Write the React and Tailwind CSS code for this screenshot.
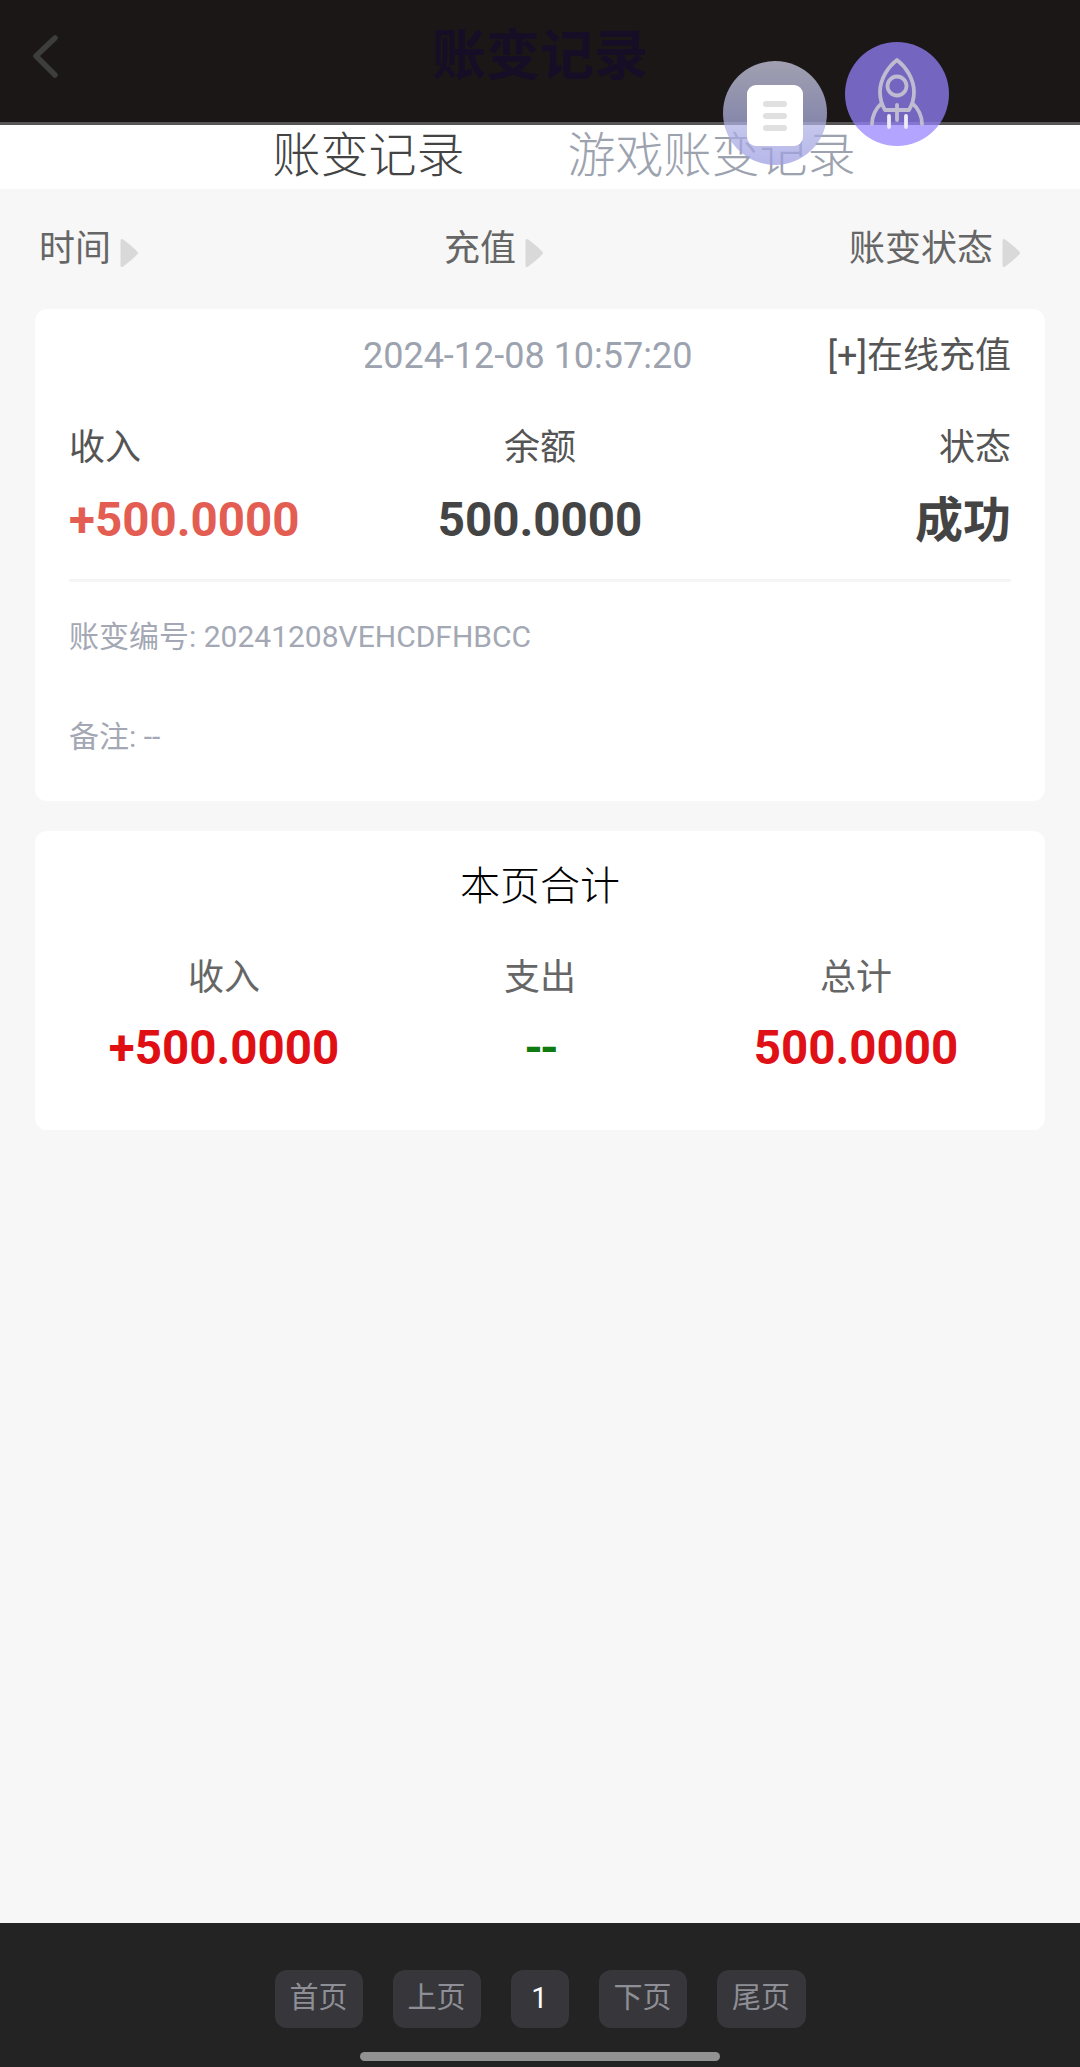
import React from "react";

const FONT = "font-['Roboto','Noto_Sans_CJK_SC',sans-serif]";

function Arrow() {
  return (
    <svg width="18" height="30" viewBox="0 0 18 30" className="mt-[7px] ml-[9px]">
      <path d="M2 2.5 C8 7 13 11 16.5 15 C13 19 8 23 2 27.5 Z" fill="#d9d9d9" stroke="#d9d9d9" strokeWidth="3" strokeLinejoin="round" />
    </svg>
  );
}

function FilterItem({ label }) {
  return (
    <div className="flex items-center">
      <span className="text-[36px] leading-[50px] text-[#666]">{label}</span>
      <Arrow />
    </div>
  );
}

function RocketIcon() {
  return (
    <svg width="104" height="104" viewBox="0 0 104 104" fill="none" stroke="#bfbbd0" strokeWidth="3.8" strokeLinecap="round" strokeLinejoin="round">
      <path d="M52 18 C43 25 35 37 35 50 C35 57 37 63 40 68 L64 68 C67 63 69 57 69 50 C69 37 61 25 52 18 Z" />
      <circle cx="52" cy="44" r="9.5" />
      <path d="M36 62 C31 66 27 74 27 82" />
      <path d="M68 62 C73 66 77 74 77 82" />
      <path d="M52 63 L52 78" />
      <path d="M44 74 L44 85" stroke="#eeeaf6" />
      <path d="M61 74 L61 85" stroke="#eeeaf6" />
    </svg>
  );
}

function FloatButtons() {
  return (
    <>
      <div className="absolute left-[723px] top-[61px] flex h-[104px] w-[104px] items-center justify-center rounded-full bg-linear-to-b from-[#d4d5ecb8] to-[#9a9be0b8]">
        <div className="mt-[5px] flex h-[61px] w-[56px] flex-col items-center justify-center gap-[6px] rounded-[9px] bg-white">
          <span className="h-[6px] w-[24px] rounded-full bg-[#e0e0e0]" />
          <span className="h-[6px] w-[24px] rounded-full bg-[#e0e0e0]" />
          <span className="h-[6px] w-[24px] rounded-full bg-[#e0e0e0]" />
        </div>
      </div>
      <div className="absolute left-[845px] top-[42px] h-[104px] w-[104px] rounded-full bg-[#9582ffba]">
        <RocketIcon />
      </div>
    </>
  );
}

function PageButton({ children, active, className }) {
  return (
    <div
      className={`flex h-[58px] items-center justify-center rounded-[12px] bg-[#37373b] text-[29px] ${className} ${
        active ? "text-white" : "text-[#8e8e96]"
      }`}
    >
      {children}
    </div>
  );
}

export default function App() {
  return (
    <div className={`relative flex h-[2067px] w-[1080px] flex-col overflow-hidden bg-[#f7f7f7] ${FONT}`}>
      <header className="grid h-[125px] grid-cols-[1fr_auto_1fr] items-center border-b-[3px] border-[#555] bg-[#1a1716] pb-[8px]">
        <svg width="30" height="46" viewBox="0 0 30 46" fill="none" className="ml-[30px]">
          <path d="M25 4 L6 22 L25 41" stroke="#3d3d3d" strokeWidth="5.5" strokeLinecap="round" strokeLinejoin="round" />
        </svg>
        <h1 className="text-[54px] font-bold leading-[70px] text-[#160d26]">账变记录</h1>
        <div />
      </header>

      <div className="flex h-[64px] items-center justify-center gap-[103px] bg-white pb-[3px] pl-[48px] text-[48px] leading-[64px]">
        <span className="font-light text-[#444]">账变记录</span>
        <span className="font-light text-[#9ca3af]">游戏账变记录</span>
      </div>

      <div className="flex h-[120px] items-center justify-between pr-[60px] pl-[39px]">
        <FilterItem label="时间" />
        <FilterItem label="充值" />
        <FilterItem label="账变状态" />
      </div>

      <section className="mx-[35px] rounded-[12px] bg-white px-[34px] pt-[22px] pb-[39px]">
        <div className="flex h-[50px] items-center justify-end gap-[135px]">
          <span className="text-[36px] text-[#9ca3af]">2024-12-08 10:57:20</span>
          <span className="text-[36px] text-[#555]">[+]在线充值</span>
        </div>
        <div className="mt-[40px] grid h-[50px] grid-cols-3 items-center text-[36px] text-[#555]">
          <span>收入</span>
          <span className="text-center">余额</span>
          <span className="text-right">状态</span>
        </div>
        <div className="mt-[14px] grid h-[60px] grid-cols-3 items-center text-[47.5px] font-bold">
          <span className="text-[#e35d52]">+500.0000</span>
          <span className="text-center text-[#444]">500.0000</span>
          <span className="text-right text-[48px] text-[#444]">成功</span>
        </div>
        <div className="mt-[34px] h-[3px] bg-[#f5f5f5]" />
        <div className="mt-[30px] h-[50px] text-[30px] leading-[50px] text-[#a3a8b4]">账变编号: 20241208VEHCDFHBCC</div>
        <div className="mt-[50px] h-[50px] text-[30px] leading-[50px] text-[#a3a8b4]">备注: --</div>
      </section>

      <section className="mx-[35px] mt-[30px] rounded-[12px] bg-white px-[31px] pt-[31px] pb-[57px]">
        <div className="h-[50px] text-center text-[40px] font-light leading-[50px] text-black">本页合计</div>
        <div className="mt-[39px] grid h-[50px] grid-cols-3 items-center text-center text-[36px] text-[#666]">
          <span>收入</span>
          <span>支出</span>
          <span>总计</span>
        </div>
        <div className="mt-[12px] grid h-[60px] grid-cols-3 items-center text-center text-[47.5px] font-bold">
          <span className="text-[#e00f14]">+500.0000</span>
          <span className="text-[#0f7a0f] tracking-[-3px]">--</span>
          <span className="text-[#df1016]">500.0000</span>
        </div>
      </section>

      <footer className="mt-auto flex h-[144px] flex-col items-center bg-[#232323] pt-[47px]">
        <div className="flex items-center gap-[30px]">
          <PageButton className="w-[88px]">首页</PageButton>
          <PageButton className="w-[88px]">上页</PageButton>
          <PageButton className="w-[58px]" active>1</PageButton>
          <PageButton className="w-[88px]">下页</PageButton>
          <PageButton className="w-[89px]">尾页</PageButton>
        </div>
        <div className="mt-[24px] h-[9px] w-[360px] rounded-full bg-[#929292]" />
      </footer>

      <FloatButtons />
    </div>
  );
}
